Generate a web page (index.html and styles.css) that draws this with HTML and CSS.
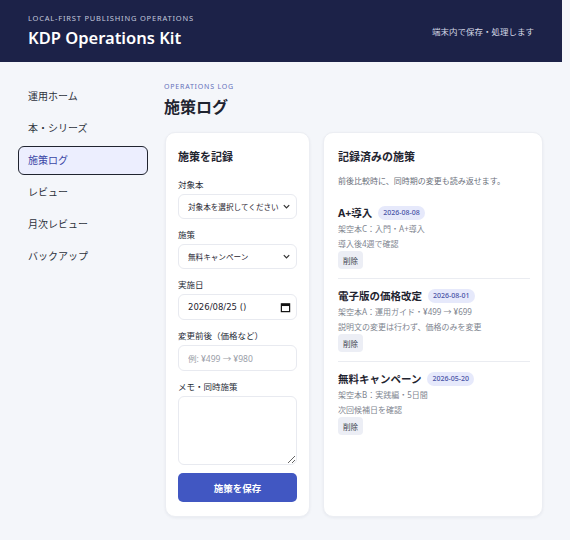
FILE: index.html
```html
<!DOCTYPE html>
<html lang="ja">
<head>
  <meta charset="UTF-8" />
  <meta name="viewport" content="width=device-width, initial-scale=1.0" />
  <title>KDP Operations Kit</title>
  <link rel="stylesheet" href="styles.css">
</head>
<body>
  <div class="app">
    <header class="topbar">
      <div>
        <p class="eyebrow">LOCAL-FIRST PUBLISHING OPERATIONS</p>
        <h1>KDP Operations Kit</h1>
      </div>
      <span class="topbar-note">端末内で保存・処理します</span>
    </header>

    <div class="layout">
      <nav class="sidebar">
        <a href="#">運用ホーム</a>
        <a href="#">本・シリーズ</a>
        <a href="#" class="active">施策ログ</a>
        <a href="#">レビュー</a>
        <a href="#">月次レビュー</a>
        <a href="#">バックアップ</a>
      </nav>

      <main class="main">
        <p class="section-label">OPERATIONS LOG</p>
        <h2 class="page-title">施策ログ</h2>

        <div class="cards">
          <form class="card form-card">
            <h3>施策を記録</h3>

            <label class="field">
              <span>対象本</span>
              <div class="select-box">
                <select>
                  <option>対象本を選択してください</option>
                </select>
                <svg width="9" height="9" viewBox="0 0 10 10"><path d="M2 3.5 L5 6.5 L8 3.5" fill="none" stroke="#333" stroke-width="1.4"/></svg>
              </div>
            </label>

            <label class="field">
              <span>施策</span>
              <div class="select-box">
                <select>
                  <option>無料キャンペーン</option>
                </select>
                <svg width="9" height="9" viewBox="0 0 10 10"><path d="M2 3.5 L5 6.5 L8 3.5" fill="none" stroke="#333" stroke-width="1.4"/></svg>
              </div>
            </label>

            <label class="field">
              <span>実施日</span>
              <div class="input-box date-box">
                <input type="text" value="2026/08/25 ()" />
                <svg width="11" height="11" viewBox="0 0 12 12"><rect x="1.5" y="2" width="9" height="8.5" fill="none" stroke="#111" stroke-width="1.3"/><rect x="1.5" y="2" width="9" height="2.4" fill="#111"/></svg>
              </div>
            </label>

            <label class="field">
              <span>変更前後（価格など）</span>
              <div class="input-box">
                <input type="text" placeholder="例: ¥499 → ¥980" />
              </div>
            </label>

            <label class="field">
              <span>メモ・同時施策</span>
              <textarea></textarea>
            </label>

            <button type="button" class="save-btn">施策を保存</button>
          </form>

          <section class="card log-card">
            <h3>記録済みの施策</h3>
            <p class="hint">前後比較時に、同時期の変更も読み返せます。</p>

            <div id="logList"></div>
          </section>
        </div>
      </main>
    </div>
  </div>

  <script>
    const logs = [
      { title: 'A+導入', date: '2026-08-08', book: '架空本C：入門・A+導入', memo: '導入後4週で確認' },
      { title: '電子版の価格改定', date: '2026-08-01', book: '架空本A：運用ガイド・¥499 → ¥699', memo: '説明文の変更は行わず、価格のみを変更' },
      { title: '無料キャンペーン', date: '2026-05-20', book: '架空本B：実践編・5日間', memo: '次回候補日を確認' }
    ];

    function renderLogs() {
      const list = document.getElementById('logList');
      list.innerHTML = '';
      logs.forEach(log => {
        const item = document.createElement('div');
        item.classList.add('log-item');
        item.innerHTML = `
          <div class="log-title">${log.title}<span class="badge">${log.date}</span></div>
          <p>${log.book}</p>
          <p>${log.memo}</p>
          <button type="button" class="delete-btn">削除</button>
        `;
        list.appendChild(item);
      });
    }

    renderLogs();
  </script>
</body>
</html>
```

FILE: styles.css
```css
* {
  box-sizing: border-box;
}

body {
  margin: 0;
  background: #f4f6fa;
  font-family: "Noto Sans", "Noto Sans CJK JP", sans-serif;
  color: #1f2430;
}

.app {
  width: 562px;
  min-height: 540px;
}

.topbar {
  background-color: #1c2248;
  color: white;
  height: 62px;
  padding: 0 28px;
  display: flex;
  justify-content: space-between;
  align-items: center;
}

.eyebrow {
  margin: 0 0 4px;
  font-size: 7.5px;
  letter-spacing: 0.8px;
  color: #c3c8dc;
}

.topbar h1 {
  margin: 0;
  font-size: 16.5px;
  font-weight: 600;
  line-height: 22px;
}

.topbar-note {
  font-size: 8.5px;
  color: #d6d9e6;
}

.layout {
  display: flex;
}

.sidebar {
  width: 164px;
  flex-shrink: 0;
  padding: 20px 16px 0 18px;
  display: flex;
  flex-direction: column;
  gap: 3px;
}

.sidebar a {
  display: block;
  height: 29px;
  line-height: 27px;
  padding: 0 9px;
  border: 1.5px solid transparent;
  border-radius: 6px;
  font-size: 10px;
  color: #2d323c;
  text-decoration: none;
}

.sidebar a.active {
  background: #eceefe;
  border-color: #20242f;
  color: #3a46a6;
}

.main {
  flex: 1;
  padding: 20px 19px 24px 0;
}

.section-label {
  margin: 0;
  font-size: 7px;
  letter-spacing: 0.8px;
  color: #6470ba;
  line-height: 10px;
}

.page-title {
  margin: 4px 0 0;
  font-size: 16px;
  font-weight: 700;
  line-height: 22px;
}

.cards {
  margin-top: 14px;
  margin-left: 1px;
  display: grid;
  grid-template-columns: 145px 1fr;
  gap: 13px;
}

.card {
  background: white;
  border-radius: 10px;
  box-shadow: 0 1px 3px rgba(20, 30, 60, 0.06);
  border: 1px solid #eceef3;
}

.card h3 {
  margin: 0;
  font-size: 11px;
  font-weight: 700;
  line-height: 15px;
}

.form-card {
  padding: 16px 12px 14px 12px;
  display: flex;
  flex-direction: column;
}

.form-card h3 {
  margin-bottom: 14px;
}

.field {
  display: flex;
  flex-direction: column;
  margin-bottom: 9px;
}

.field span {
  font-size: 8.5px;
  line-height: 13px;
  margin-bottom: 3px;
  color: #252a35;
}

.select-box,
.input-box {
  display: flex;
  align-items: center;
  height: 25px;
  padding: 0 5px 0 9px;
  border: 1px solid #e8eaf0;
  border-radius: 6px;
  background: white;
}

.input-box {
  height: 26px;
}

.select-box select {
  flex: 1;
  min-width: 0;
  appearance: none;
  border: none;
  background: transparent;
  font-family: inherit;
  font-size: 7.6px;
  color: #1f2430;
  padding: 0;
  outline: none;
}

.input-box input {
  flex: 1;
  min-width: 0;
  border: none;
  padding: 0;
  font-family: inherit;
  font-size: 8.5px;
  color: #1f2430;
  outline: none;
}

.date-box input {
  font-family: "DejaVu Sans", sans-serif;
  font-size: 8.5px;
}

.input-box input::placeholder {
  color: #9a9ea8;
}

textarea {
  height: 69px;
  border: 1px solid #e8eaf0;
  border-radius: 6px;
  resize: vertical;
  font-family: inherit;
  font-size: 9px;
}

.save-btn {
  margin-top: -1px;
  height: 29px;
  background-color: #4157c2;
  color: white;
  border: none;
  border-radius: 5px;
  font-family: inherit;
  font-size: 9.5px;
  font-weight: 700;
  cursor: pointer;
}

.log-card {
  padding: 16px 12px 16px 14px;
}

.hint {
  margin: 10px 0 9px;
  font-size: 8px;
  line-height: 13px;
  color: #6b707b;
}

.log-item {
  padding: 9px 0;
  border-bottom: 1px solid #eaecf1;
}

.log-item:last-child {
  border-bottom: none;
}

.log-title {
  display: flex;
  align-items: center;
  font-size: 10.5px;
  font-weight: 700;
  line-height: 16px;
}

.badge {
  margin-left: 6px;
  padding: 0 5px;
  height: 14px;
  line-height: 14px;
  border-radius: 7px;
  background: #e6e9fb;
  color: #4652a6;
  font-size: 7px;
  font-weight: 500;
}

.log-item p {
  margin: 0;
  font-size: 8px;
  line-height: 15px;
  color: #80858f;
}

.delete-btn {
  display: block;
  height: 18px;
  padding: 0 5px;
  border: none;
  border-radius: 4px;
  background: #eceef5;
  color: #3a3f4a;
  font-family: inherit;
  font-size: 7.5px;
  cursor: pointer;
}
```
